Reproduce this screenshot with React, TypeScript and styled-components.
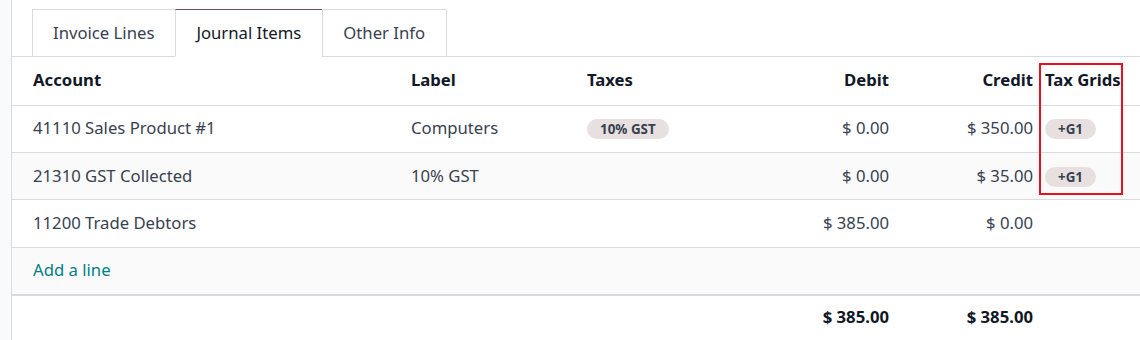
import React from "react";
import styled, { createGlobalStyle } from "styled-components";

const GlobalStyle = createGlobalStyle`
  html, body {
    margin: 0;
    padding: 0;
    background: #ffffff;
    font-family: "Noto Sans", "Open Sans", sans-serif;
    color: #374151;
  }
`;

const Page = styled.div`
  display: flex;
  width: 1140px;
  height: 340px;
  overflow: hidden;
`;

const SideStrip = styled.div`
  width: 11px;
  flex: none;
  background: #f9fafb;
  border-right: 1px solid #d8dadd;
`;

const Sheet = styled.div`
  flex: 1;
  display: flex;
  flex-direction: column;
  padding-top: 9px;
  min-width: 0;
`;

const TabBar = styled.ul`
  display: flex;
  list-style: none;
  margin: 0;
  padding: 0 0 0 20px;
  border-bottom: 1px solid #d8dadd;
`;

const Tab = styled.li<{ $active?: boolean }>`
  height: 48px;
  display: flex;
  align-items: center;
  padding: 0 21px 2px 20px;
  box-sizing: border-box;
  font-size: 16.7px;
  margin-bottom: -1px;
  color: ${(p) => (p.$active ? "#111827" : "#374151")};
  background: #ffffff;
  border: 1px solid #d8dadd;
  border-top-color: ${(p) => (p.$active ? "#714b67" : "#d8dadd")};
  border-bottom-color: ${(p) => (p.$active ? "#ffffff" : "#d8dadd")};
  & + & {
    margin-left: -1px;
  }
`;

const TableWrap = styled.div`
  position: relative;
`;

const Table = styled.table`
  width: 1128px;
  border-collapse: collapse;
  table-layout: fixed;
  font-size: 16.7px;
  line-height: 22px;
`;

const HeadCell = styled.th<{ $align?: "left" | "right" }>`
  height: 48px;
  box-sizing: border-box;
  padding: 0 6px 2px;
  text-align: ${(p) => p.$align || "left"};
  font-weight: 700;
  color: #111827;
  border-bottom: 1px solid #d8dadd;
  white-space: nowrap;
  &:first-child {
    padding-left: 21px;
  }
`;

const Row = styled.tr<{ $striped?: boolean }>`
  background: ${(p) => (p.$striped ? "#fafafa" : "#ffffff")};
  border-bottom: 1px solid #d8dadd;
`;

const Cell = styled.td<{ $align?: "left" | "right" }>`
  height: 47.4px;
  box-sizing: border-box;
  padding: 0 6px 1px;
  text-align: ${(p) => p.$align || "left"};
  white-space: nowrap;
  &:first-child {
    padding-left: 21px;
  }
`;

const AddLine = styled.a`
  color: #017e84;
  text-decoration: none;
  cursor: pointer;
`;

const FootRow = styled.tr`
  border-top: 2px solid #d8dadd;
`;

const FootCell = styled.td<{ $align?: "left" | "right" }>`
  height: 44px;
  box-sizing: border-box;
  padding: 0 6px 1px;
  text-align: ${(p) => p.$align || "left"};
  font-weight: 700;
  color: #111827;
`;

const Badge = styled.span`
  display: inline-block;
  padding: 0 13px;
  line-height: 20px;
  border-radius: 10px;
  background: #e7e0df;
  color: #374151;
  font-size: 13.4px;
  font-weight: 700;
  vertical-align: middle;
`;

const Highlight = styled.div`
  position: absolute;
  left: 1027px;
  top: 6px;
  width: 80px;
  height: 128px;
  border: 2px solid #e8101e;
  pointer-events: none;
`;

type Line = {
  account: string;
  label?: string;
  tax?: string;
  debit: string;
  credit: string;
  grid?: string;
};

const lines: Line[] = [
  { account: "41110 Sales Product #1", label: "Computers", tax: "10% GST", debit: "$ 0.00", credit: "$ 350.00", grid: "+G1" },
  { account: "21310 GST Collected", label: "10% GST", debit: "$ 0.00", credit: "$ 35.00", grid: "+G1" },
  { account: "11200 Trade Debtors", debit: "$ 385.00", credit: "$ 0.00" },
];

export default function App() {
  return (
    <Page>
      <GlobalStyle />
      <SideStrip />
      <Sheet>
        <TabBar>
          <Tab>Invoice Lines</Tab>
          <Tab $active>Journal Items</Tab>
          <Tab>Other Info</Tab>
        </TabBar>
        <TableWrap>
          <Table>
            <colgroup>
              <col style={{ width: 393 }} />
              <col style={{ width: 176 }} />
              <col style={{ width: 166 }} />
              <col style={{ width: 148 }} />
              <col style={{ width: 144 }} />
              <col style={{ width: 84 }} />
              <col style={{ width: 17 }} />
            </colgroup>
            <thead>
              <tr>
                <HeadCell>Account</HeadCell>
                <HeadCell>Label</HeadCell>
                <HeadCell>Taxes</HeadCell>
                <HeadCell $align="right">Debit</HeadCell>
                <HeadCell $align="right">Credit</HeadCell>
                <HeadCell>Tax Grids</HeadCell>
                <HeadCell />
              </tr>
            </thead>
            <tbody>
              {lines.map((l, i) => (
                <Row key={l.account} $striped={i % 2 === 1}>
                  <Cell>{l.account}</Cell>
                  <Cell>{l.label}</Cell>
                  <Cell>{l.tax && <Badge>{l.tax}</Badge>}</Cell>
                  <Cell $align="right">{l.debit}</Cell>
                  <Cell $align="right">{l.credit}</Cell>
                  <Cell>{l.grid && <Badge>{l.grid}</Badge>}</Cell>
                  <Cell />
                </Row>
              ))}
              <Row $striped>
                <Cell colSpan={7}>
                  <AddLine>Add a line</AddLine>
                </Cell>
              </Row>
            </tbody>
            <tfoot>
              <FootRow>
                <FootCell />
                <FootCell />
                <FootCell />
                <FootCell $align="right">$ 385.00</FootCell>
                <FootCell $align="right">$ 385.00</FootCell>
                <FootCell />
                <FootCell />
              </FootRow>
            </tfoot>
          </Table>
          <Highlight />
        </TableWrap>
      </Sheet>
    </Page>
  );
}
